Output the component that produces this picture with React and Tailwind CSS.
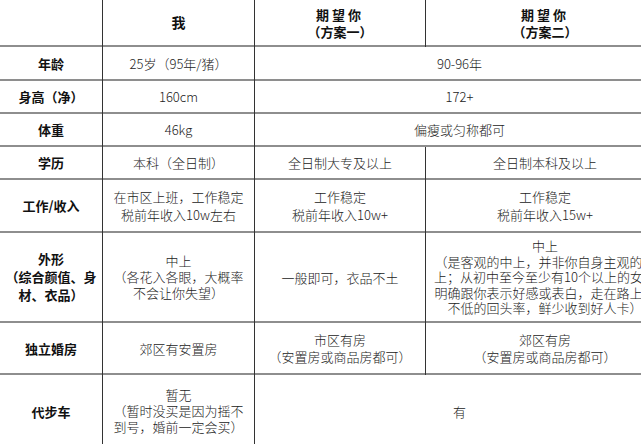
import React from "react";

const Cell = ({ lines, bold, span2, lead = "leading-[17px]", extra = "" }) => {
  const arr = Array.isArray(lines) ? lines : [lines];
  return (
    <div
      className={
        "bg-white border-b-2 border-[#8e8e8e] flex flex-col items-center justify-center text-center " +
        (span2 ? "col-span-2 " : "") +
        (bold ? "font-bold text-[#111] " : "font-light text-[#222] ") +
        lead +
        " " +
        extra
      }
    >
      {arr.map((l, i) => (
        <div key={i} className="whitespace-nowrap">
          {l}
        </div>
      ))}
    </div>
  );
};

export default function App() {
  return (
    <div className="w-[641px] h-[444px] overflow-hidden bg-white font-['Noto_Sans_CJK_SC',sans-serif] text-[13px]">
      <div className="w-[664px] grid grid-cols-[102px_151px_170px_238px] grid-rows-[47px_34px_33px_33px_33px_53px_90px_52px_74px] gap-x-px bg-[#333]">
        {/* header */}
        <Cell lines="" />
        <Cell lines="我" bold extra="text-[14px]" />
        <Cell lines={["期望你", "（方案一）"]} bold extra="text-[13px] [&>div:first-child]:tracking-[3px]" />
        <Cell lines={["期望你", "（方案二）"]} bold extra="text-[13px] [&>div:first-child]:tracking-[3px]" />

        <Cell lines="年龄" bold />
        <Cell lines="25岁（95年/猪）" />
        <Cell lines="90-96年" span2 />

        <Cell lines="身高（净）" bold />
        <Cell lines="160cm" />
        <Cell lines="172+" span2 />

        <Cell lines="体重" bold />
        <Cell lines="46kg" />
        <Cell lines="偏瘦或匀称都可" span2 />

        <Cell lines="学历" bold />
        <Cell lines="本科（全日制）" />
        <Cell lines="全日制大专及以上" />
        <Cell lines="全日制本科及以上" />

        <Cell lines="工作/收入" bold />
        <Cell lines={["在市区上班，工作稳定", "税前年收入10w左右"]} lead="leading-[18px]" />
        <Cell lines={["工作稳定", "税前年收入10w+"]} lead="leading-[18px]" />
        <Cell lines={["工作稳定", "税前年收入15w+"]} lead="leading-[18px]" />

        <Cell lines={["外形", "（综合颜值、身", "材、衣品）"]} bold lead="leading-[18px]" />
        <Cell lines={["中上", "（各花入各眼，大概率", "不会让你失望）"]} lead="leading-[16px]" />
        <Cell lines="一般即可，衣品不土" />
        <Cell
          lines={[
            "中上",
            "（是客观的中上，并非你自身主观的中",
            "上；从初中至今至少有10个以上的女生",
            "明确跟你表示好感或表白，走在路上有",
            "不低的回头率，鲜少收到好人卡）",
          ]}
          lead="leading-[15.5px]"
        />

        <Cell lines="独立婚房" bold />
        <Cell lines="郊区有安置房" />
        <Cell lines={["市区有房", "（安置房或商品房都可）"]} lead="leading-[17px]" />
        <Cell lines={["郊区有房", "（安置房或商品房都可）"]} lead="leading-[17px]" />

        <Cell lines="代步车" bold />
        <Cell lines={["暂无", "（暂时没买是因为摇不", "到号，婚前一定会买）"]} lead="leading-[16px]" />
        <Cell lines="有" span2 />
      </div>
    </div>
  );
}
